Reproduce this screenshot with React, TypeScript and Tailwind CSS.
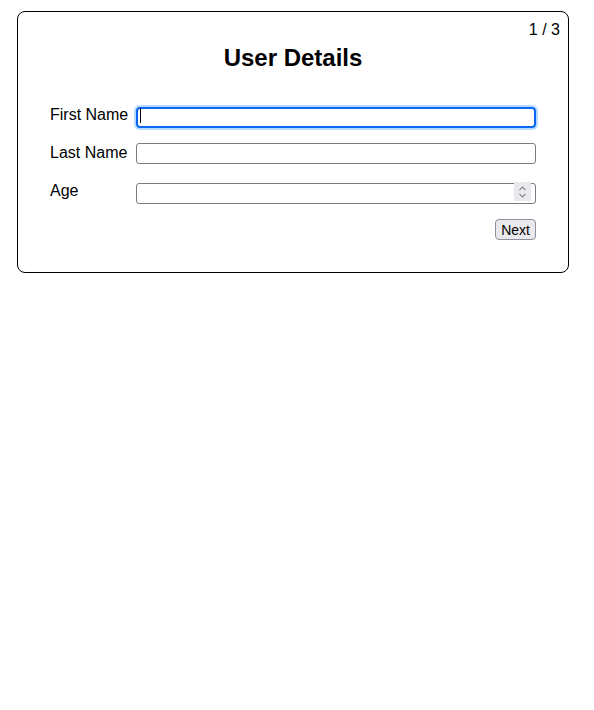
import React from 'react';

const Spinner: React.FC = () => (
  <div className="absolute right-[5px] top-px w-[17px] h-[19px] bg-[#e9e9ed] flex items-center justify-center">
    <svg width="9" height="14" viewBox="0 0 9 14" fill="none" stroke="#8a8a8a" strokeWidth="1.1">
      <path d="M1.5 5 L4.5 2 L7.5 5" />
      <path d="M1.5 9 L4.5 12 L7.5 9" />
    </svg>
  </div>
);

export default function App() {
  return (
    <div className="pt-[11px] pl-[17px] font-['Liberation_Sans',Arial,sans-serif] text-black">
      <div className="relative w-[552px] border border-black rounded-[8px] px-8 pt-8 pb-8">
        {/* step counter */}
        <span className="absolute top-[9px] right-2 text-base leading-[18px]">1 / 3</span>

        <h2 className="text-center text-2xl font-bold leading-[28px] mb-[33px]">User Details</h2>

        <div className="grid grid-cols-[auto_1fr] gap-x-2 gap-y-[17px] items-center">
          <label className="text-base leading-[18px] -mt-[2px]">First Name</label>
          <div className="relative h-[21px]">
            <input
              type="text"
              className="w-full h-[21px] border-2 border-[#0a67f5] rounded-[4px] outline-none shadow-[0_0_0_2px_#b6daff] px-1 text-sm"
            />
            <span className="absolute left-[4px] top-[3px] w-px h-[15px] bg-black" />
          </div>

          <label className="text-base leading-[18px] -mt-[2px]">Last Name</label>
          <input
            type="text"
            className="w-full h-[21px] border border-[#7b7b80] rounded-[3px] outline-none px-1 text-sm"
          />

          <label className="text-base leading-[18px] -mt-[2px]">Age</label>
          <div className="relative h-[21px]">
            <input
              type="text"
              className="w-full h-[21px] border border-[#7b7b80] rounded-[3px] outline-none px-1 text-sm"
            />
            <Spinner />
          </div>
        </div>

        <div className="flex justify-end mt-[17px]">
          <button className="h-[21px] px-[5px] text-[14px] leading-none bg-[#e9e9ed] border border-[#8f8f9d] rounded-[4px]">
            Next
          </button>
        </div>
      </div>
    </div>
  );
}
